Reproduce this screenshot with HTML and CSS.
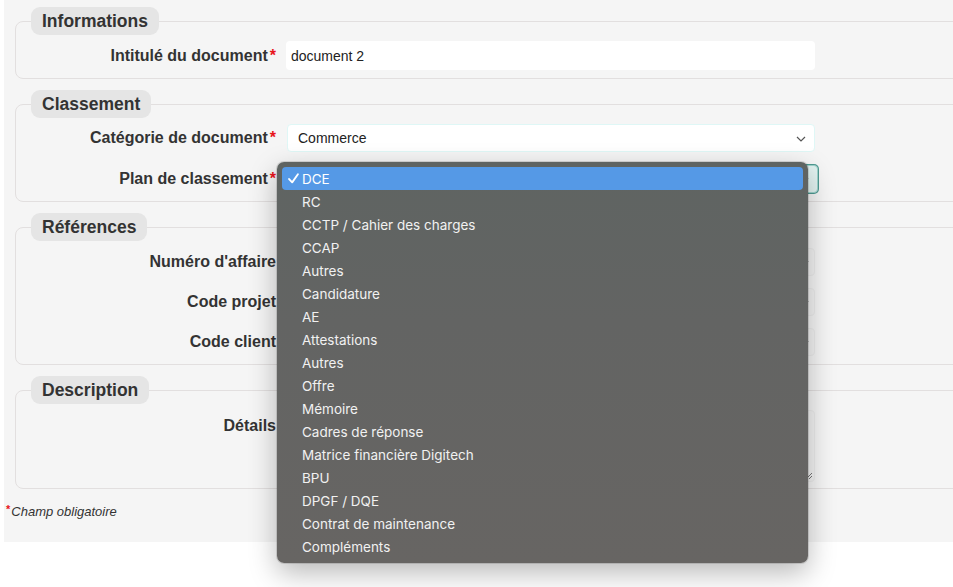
FILE: index.html
```html
<!DOCTYPE html>
<html lang="fr">
<head>
<meta charset="utf-8">
<title>Document</title>
<link rel="stylesheet" href="styles.css">
</head>
<body>
<div class="page">
  <fieldset class="group">
    <legend class="legend">Informations</legend>
    <div class="rows rows-info">
      <div class="row">
        <label class="label">Intitulé du document<span class="req">*</span></label>
        <input class="field" type="text" value="document 2">
      </div>
    </div>
  </fieldset>

  <fieldset class="group">
    <legend class="legend">Classement</legend>
    <div class="rows rows-class">
      <div class="row">
        <label class="label">Catégorie de document<span class="req">*</span></label>
        <div class="select select-cat"><span>Commerce</span>
          <svg class="chev" viewBox="0 0 10 6" width="10" height="6"><path d="M1 1l4 4 4-4" fill="none" stroke="#555" stroke-width="1.2"/></svg>
        </div>
      </div>
      <div class="row">
        <label class="label">Plan de classement<span class="req">*</span></label>
        <div class="select select-focus">
          <svg class="chev" viewBox="0 0 10 6" width="10" height="6"><path d="M1 1l4 4 4-4" fill="none" stroke="#555" stroke-width="1.2"/></svg>
        </div>
      </div>
    </div>
  </fieldset>

  <fieldset class="group">
    <legend class="legend">Références</legend>
    <div class="rows rows-ref">
      <div class="row">
        <label class="label">Numéro d'affaire</label>
        <div class="select select-faint"><svg class="chev" viewBox="0 0 10 6" width="10" height="6"><path d="M1 1l4 4 4-4" fill="none" stroke="#222" stroke-width="1.4"/></svg></div>
      </div>
      <div class="row">
        <label class="label">Code projet</label>
        <div class="select select-faint"><svg class="chev" viewBox="0 0 10 6" width="10" height="6"><path d="M1 1l4 4 4-4" fill="none" stroke="#222" stroke-width="1.4"/></svg></div>
      </div>
      <div class="row">
        <label class="label">Code client</label>
        <div class="select select-faint"><svg class="chev" viewBox="0 0 10 6" width="10" height="6"><path d="M1 1l4 4 4-4" fill="none" stroke="#222" stroke-width="1.4"/></svg></div>
      </div>
    </div>
  </fieldset>

  <fieldset class="group group-desc">
    <legend class="legend">Description</legend>
    <div class="rows rows-desc">
      <div class="row row-top">
        <label class="label label-top">Détails</label>
        <div class="area">
          <svg class="grip" viewBox="0 0 8 8" width="8" height="8"><path d="M7 1L1 7M7 4L4 7" stroke="#777" stroke-width="1"/></svg>
        </div>
      </div>
    </div>
  </fieldset>

  <p class="note"><span class="req">*</span><em>Champ obligatoire</em></p>
</div>

<div class="menu">
  <div class="opt opt-sel"><svg class="check" viewBox="0 0 10 10" width="11" height="11"><path d="M1 5.5l2.8 3L9 1.2" fill="none" stroke="#fff" stroke-width="1.7" stroke-linecap="round" stroke-linejoin="round"/></svg>DCE</div>
  <div class="opt">RC</div>
  <div class="opt">CCTP / Cahier des charges</div>
  <div class="opt">CCAP</div>
  <div class="opt">Autres</div>
  <div class="opt">Candidature</div>
  <div class="opt">AE</div>
  <div class="opt">Attestations</div>
  <div class="opt">Autres</div>
  <div class="opt">Offre</div>
  <div class="opt">Mémoire</div>
  <div class="opt">Cadres de réponse</div>
  <div class="opt">Matrice financière Digitech</div>
  <div class="opt">BPU</div>
  <div class="opt">DPGF / DQE</div>
  <div class="opt">Contrat de maintenance</div>
  <div class="opt">Compléments</div>
</div>
</body>
</html>
```
FILE: styles.css
```css
html, body {
  margin: 0;
  padding: 0;
  background: #ffffff;
  overflow: hidden;
  font-family: "Liberation Sans", Arial, sans-serif;
  color: #333;
}

.page {
  margin-left: 4px;
  width: 1000px;
  height: 542px;
  box-sizing: border-box;
  padding: 7px 0 0 11px;
  background: #f5f5f5;
}

.group {
  margin: 0 0 11px 0;
  padding: 0 0 8px 0;
  border: 1px solid #e2dfdf;
  border-radius: 8px;
  min-width: 0;
}

.group-desc { padding-bottom: 6px; }

.legend {
  margin-left: 15px;
  padding: 3px 11px 2px;
  background: #e5e5e5;
  border-radius: 9px;
  font-weight: bold;
  font-size: 17.5px;
  line-height: 23px;
  color: #333;
}

.rows {
  display: flex;
  flex-direction: column;
  padding-top: 6px;
}

.rows-class { gap: 13px; }
.rows-ref { gap: 12px; padding-top: 7px; }

.row {
  display: grid;
  grid-template-columns: 260px 529px;
  column-gap: 10px;
  align-items: center;
}

.row-top { align-items: start; }

.label {
  text-align: right;
  font-weight: bold;
  font-size: 16px;
  color: #333;
  white-space: nowrap;
}

.label-top { padding-top: 7px; }

.req {
  color: #e8141b;
  font-weight: bold;
  margin-left: 2px;
}

.field {
  height: 29px;
  box-sizing: border-box;
  border: none;
  border-radius: 4px;
  background: #fff;
  padding: 0 5px;
  font-family: "Liberation Sans", Arial, sans-serif;
  font-size: 14px;
  color: #222;
}

.select {
  position: relative;
  height: 28px;
  box-sizing: border-box;
  border-radius: 4px;
  background: #fff;
  display: flex;
  align-items: center;
  padding-left: 10px;
  font-size: 14px;
  color: #222;
}

.select-cat {
  border: 1px solid #dff7f6;
  margin-left: 1px;
  width: 528px;
}

.select-focus {
  margin-left: 1px;
  width: 531px;
  background: #e2f3f1;
  border: 1px solid #9fd3cc;
  box-shadow: 0 0 0 1px #4f9a92;
}

.select-faint {
  background: #f3f3f3;
  border: 1px solid #ececec;
}

.chev {
  position: absolute;
  right: 8px;
  top: 11px;
}

.select-faint .chev { right: 5px; }

.area {
  position: relative;
  height: 72px;
  box-sizing: border-box;
  border: 1px solid #ececec;
  border-radius: 4px;
  background: #f3f3f3;
}

.grip {
  position: absolute;
  right: 1px;
  bottom: 1px;
}

.note {
  margin: 14px 0 0 -9px;
  font-size: 13px;
  color: #333;
}

.note .req {
  font-size: 11px;
  margin: 0 1px 0 0;
  vertical-align: 3px;
}

.menu {
  position: absolute;
  left: 277px;
  top: 162px;
  width: 531px;
  height: 401px;
  box-sizing: border-box;
  padding: 5px 5px;
  border-radius: 7px;
  background: linear-gradient(180deg, #5f6462 0%, #636463 40%, #676563 100%);
  box-shadow: 0 10px 28px rgba(0, 0, 0, 0.28), 0 0 0 1px rgba(0, 0, 0, 0.12);
  display: flex;
  flex-direction: column;
  font-family: "Inter", "Liberation Sans", sans-serif;
  font-size: 13.5px;
  color: #f1f1f1;
}

.opt {
  height: 23px;
  line-height: 22px;
  padding-top: 1px;
  box-sizing: border-box;
  padding-left: 20px;
  border-radius: 4px;
  position: relative;
  white-space: nowrap;
}

.opt-sel {
  background: #5599e6;
  color: #fff;
}

.check {
  position: absolute;
  left: 6px;
  top: 6px;
}
```
